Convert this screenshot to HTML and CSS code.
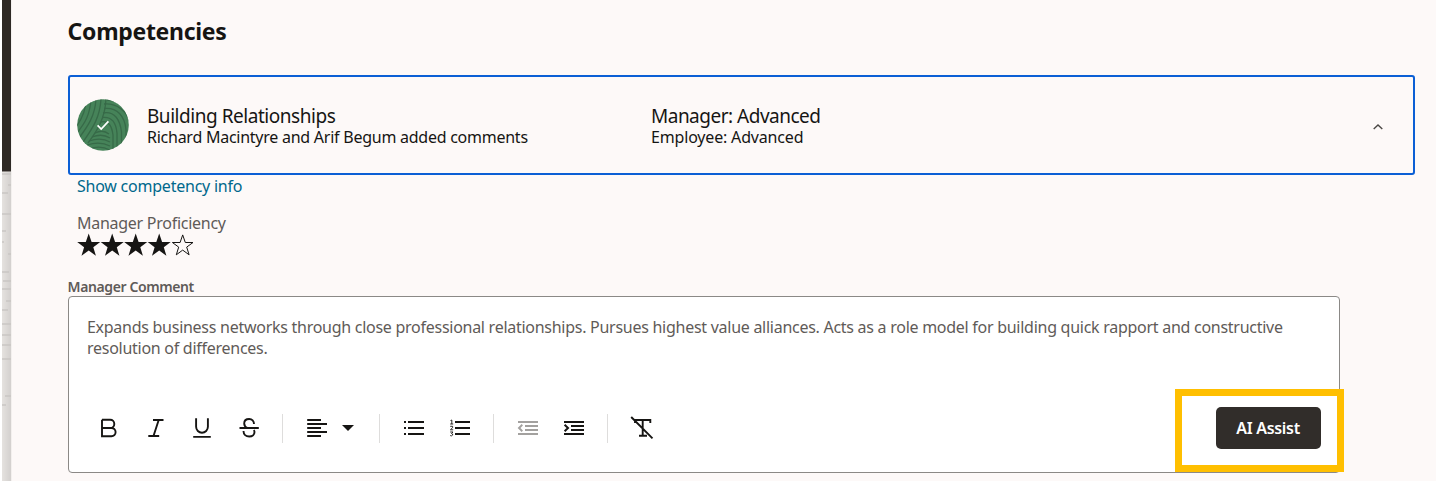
FILE: index.html
```html
<!DOCTYPE html>
<html lang="en">
<head>
<meta charset="utf-8">
<title>Competencies</title>
<link rel="stylesheet" href="styles.css">
</head>
<body>
<div class="page">
  <aside class="rail">
    <div class="rail-dark"></div>
    <svg class="rail-texture" viewBox="0 0 9 309" preserveAspectRatio="none">
      <g stroke="#c9c6c3" stroke-width="1.6">
        <path d="M0 2H9M6 13H9M0 21H6M0 42H9M0 59H4M0 70H2M6 82H9M0 100H7M1 109H9M0 117H9M4 129H9M0 138H6M0 152H9M0 163H9M0 173H9M0 187H9M3 224H9M0 233H4"/>
      </g>
    </svg>
  </aside>
  <main class="content">
    <h1 class="title">Competencies</h1>
    <section class="card">
      <svg class="badge" viewBox="0 0 52 52">
        <defs><clipPath id="disc"><circle cx="26" cy="26" r="25.8"/></clipPath></defs>
        <g clip-path="url(#disc)" fill="none">
          <rect width="52" height="52" fill="#468359"/>
          <g stroke="#376a48" stroke-width="1.3">
            <path d="M9 0C9 12 5 20-1 28M14 0C13 16 8 24 0 34M19 0C18 17 11 27 2 39M24 0C23 19 15 30 6 43M29 0C28 20 20 32 11 44"/>
            <path d="M27 5C40 4 50 12 53 24M27 9.5C40 8 48 17 49 31V52M26 14C38 12 43 21 44.5 33V52M25 18.5C35 17 39 24 40 34V52M24 23C32 21 35 28 36 36V52"/>
            <path d="M18 34Q26 30 32 35M15 38Q25 34 33 39M12 42Q24 38 33 43M10 46Q23 42 33 47M12 50Q23 46 33 51M30 1Q43 1 52 13"/>
          </g>
          <path d="M20.6 26.4L24.2 30L31.4 22.3" stroke="#fff" stroke-width="1.7"/>
        </g>
      </svg>
      <div class="card-main">
        <div class="lead name">Building Relationships</div>
        <div class="sub note">Richard Macintyre and Arif Begum added comments</div>
      </div>
      <div class="card-levels">
        <div class="lead level">Manager: Advanced</div>
        <div class="sub emp">Employee: Advanced</div>
      </div>
      <svg class="chevron" viewBox="0 0 12 8"><path d="M1.7 6L6 2L10.3 6" fill="none" stroke="#4a4744" stroke-width="1.4"/></svg>
    </section>
    <div class="details">
      <a class="info">Show competency info</a>
      <div class="prof">Manager Proficiency</div>
      <svg class="stars" viewBox="0 0 118 24">
        <defs><path id="star" d="M11.7 .5L14.6 9H23.2L16.3 14.2L18.9 22.8L11.7 17.6L4.5 22.8L7.1 14.2L.2 9H8.8Z"/></defs>
        <g fill="#161513"><use href="#star"/><use href="#star" x="23.5"/><use href="#star" x="47"/><use href="#star" x="70.5"/></g>
        <path d="M105.7 1.9L108.3 9.5H116L109.7 14.1L112.1 21.8L105.7 17.1L99.3 21.8L101.7 14.1L95.4 9.5H103.1Z" fill="none" stroke="#161513"/>
      </svg>
    </div>
    <label class="label">Manager Comment</label>
    <section class="editor">
      <div class="text"><div class="line1">Expands business networks through close professional relationships. Pursues highest value alliances. Acts as a role model for building quick rapport and constructive</div><div class="line2">resolution of differences.</div></div>
      <div class="toolbar">
        <svg class="icon" viewBox="0 0 24 24"><path d="M5 3.8H13.2A4 4 0 0 1 13.2 12H5M13.2 12H14.5A4.1 4.1 0 0 1 14.5 20.2H5V3.8"/></svg>
        <svg class="icon gap" viewBox="0 0 24 24"><path d="M9 4H19.5M4.3 20H15.2M14.7 4L9.5 20"/></svg>
        <svg class="icon gap" viewBox="0 0 24 24"><path d="M6.1 2.2V10.8A5.9 5.9 0 0 0 17.9 10.8V2.2M3.2 20.9H20.8"/></svg>
        <svg class="icon gap" viewBox="0 0 24 24"><path d="M17 8C17 5 15 3 12.2 3C9.2 3 7.2 4.8 7.2 7.5C7.2 9.5 8.3 11 10.5 12M2.5 12H21.8M6.5 15C6.5 18.5 9 20.5 12.2 20.5C15.5 20.5 17.5 18.5 17.5 16C17.5 15.2 17.2 14.5 16.8 14"/></svg>
        <span class="rule rule-a"></span>
        <svg class="icon align" viewBox="0 0 24 24"><path d="M2.2 4H16M2.2 8H22M2.2 12H16M2.2 16H22M2.2 20H16" stroke-width="1.9"/></svg>
        <svg class="caret" viewBox="0 0 12 6"><path d="M0 0H12L6 6Z" fill="#161513"/></svg>
        <span class="rule rule-b"></span>
        <svg class="icon list" viewBox="0 0 24 24"><path d="M6 6H22M6 12H22M6 18H22M2 6H4M2 12H4M2 18H4" stroke-width="2"/></svg>
        <svg class="icon gap" viewBox="0 0 24 24"><path d="M7 6H22M7 12H22M7 18H22" stroke-width="2"/><path d="M2.5 4.5L3.8 4V8M2.2 8H5.2M2.2 10.3H4.6V11.7L2.4 13.8H5.2M2.2 16H5L3.5 17.5Q5 17.7 4.7 19Q4 20.3 2.2 19.6" stroke-width=".9"/></svg>
        <span class="rule rule-a"></span>
        <svg class="icon outdent muted" viewBox="0 0 24 24"><path d="M2 6H22M9 10H22M9 14H22M2 18H22" stroke-width="1.8"/><path d="M6.3 8.8L3 12L6.3 15.2"/></svg>
        <svg class="icon gap" viewBox="0 0 24 24"><path d="M2 6H22M9 10H22M9 14H22M2 18H22" stroke-width="2"/><path d="M2.6 8.8L6 12L2.6 15.2" stroke-width="2"/></svg>
        <span class="rule rule-c"></span>
        <svg class="icon clear" viewBox="0 0 24 24"><path d="M1.2 1L22.5 22.3M5 7V4H20.3V7M12.7 4V19.8M9 19.8H17"/></svg>
      </div>
      <div class="callout"><button class="assist">AI Assist</button></div>
    </section>
  </main>
</div>
</body>
</html>
```
FILE: styles.css
```css
* { box-sizing: border-box; }
body { margin: 0; background: #fdf9f8; font-family: "Noto Sans", sans-serif; color: #161513; overflow: hidden; }
svg { display: block; flex: none; }
.page { display: flex; height: 481px; border-left: 2px solid #fff; }
.rail { width: 10px; flex: none; border-right: 1px solid #f3f0ee; background: linear-gradient(90deg, #e5e2df, #d3d0ce); }
.rail-dark { height: 172px; background: #2e2925; border-bottom: 1px solid #8c8884; }
.rail-texture { width: 9px; height: 309px; filter: blur(.6px); }
.content { flex: 1; padding-left: 55.6px; }
.title { margin: 0; padding-top: 15px; height: 75px; font-size: 23px; line-height: 32px; font-weight: 700; letter-spacing: -.3px; white-space: nowrap; }
.card { width: 1347.4px; height: 100px; border: 2px solid #0b5fd5; border-radius: 3px; display: flex; align-items: center; padding-left: 7.4px; }
.badge { width: 52px; height: 52px; }
.card-main { margin-left: 18px; width: 504px; padding-top: 2px; }
.card-levels { width: 720.6px; padding-top: 2px; }
.lead { font-size: 19px; line-height: 22px; white-space: nowrap; }
.sub { font-size: 16px; line-height: 20px; white-space: nowrap; }
.name { letter-spacing: -.46px; }
.level { letter-spacing: -.5px; }
.note { letter-spacing: -.25px; }
.emp { letter-spacing: -.17px; }
.chevron { width: 12px; height: 8px; margin-top: 4px; }
.details { padding-left: 9.4px; height: 104px; }
.info, .prof { display: block; font-size: 16px; line-height: 20px; white-space: nowrap; width: max-content; }
.info { color: #00688c; letter-spacing: -.23px; padding-top: 1px; }
.prof { color: #5f5b58; margin-top: 17px; letter-spacing: -.27px; }
.stars { width: 118px; height: 24px; }
.label { display: block; height: 17px; font-size: 14px; line-height: 16px; font-weight: 600; letter-spacing: -.4px; color: #5f5b58; white-space: nowrap; width: max-content; }
.editor { position: relative; width: 1272px; height: 177px; border: 1px solid #8b8986; border-radius: 4px; background: #fff; padding: 20px 18.4px 0; }
.text { height: 99px; font-size: 16px; line-height: 21px; color: #5f5b58; letter-spacing: -.27px; white-space: nowrap; }
.line1, .line2 { width: max-content; }
.toolbar { display: flex; align-items: center; height: 24px; padding-left: 10px; }
.icon { width: 24px; height: 24px; fill: none; stroke: #161513; stroke-width: 1.9; }
.gap { margin-left: 22.7px; }
.muted { stroke: #a3a19f; }
.rule { width: 1px; height: 29px; background: #dedddc; flex: none; }
.rule-a { margin-left: 21px; }
.rule-b { margin-left: 25.5px; }
.rule-c { margin-left: 20.5px; }
.align { margin-left: 22px; }
.list { margin-left: 21.5px; }
.outdent { margin-left: 21.5px; }
.clear { margin-left: 21.8px; }
.caret { width: 12px; height: 6px; margin-left: 12.5px; }
.callout { position: absolute; left: 1106px; top: 92px; width: 169px; height: 83px; border: 7px solid #ffbf00; background: #fff; display: flex; padding: 10.5px 0 0 34px; }
.assist { width: 105px; height: 42px; border: 0; border-radius: 5px; background: #312d2a; color: #fff; font: 600 16px "Noto Sans", sans-serif; letter-spacing: -.3px; white-space: nowrap; padding: 0; }
```
